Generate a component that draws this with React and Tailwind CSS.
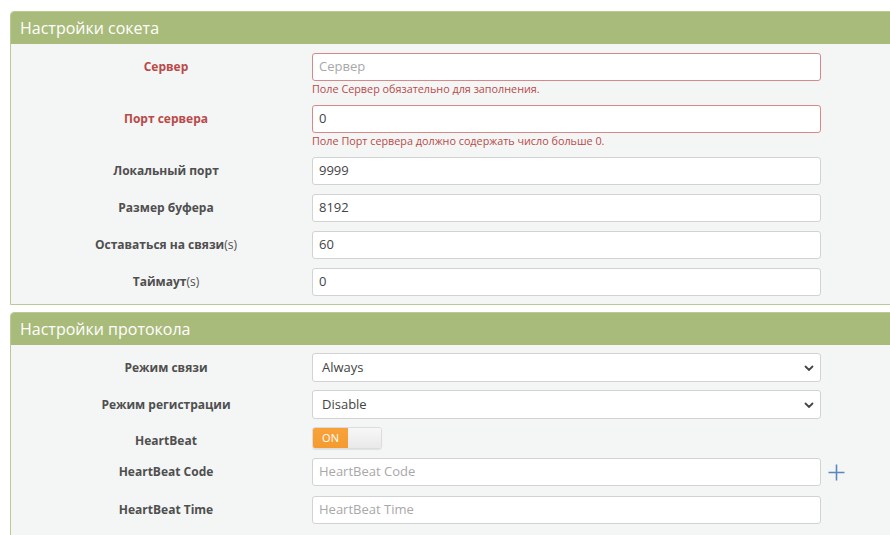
import React from "react";

const font = { fontFamily: '"Open Sans", "Noto Sans", sans-serif' };

function Label({ children, error }) {
  return (
    <div
      className={`w-[301px] shrink-0 pl-[9px] text-center text-[12px] font-bold ${
        error ? "text-[#b94a48]" : "text-[#4f4f4f]"
      }`}
    >
      {children}
    </div>
  );
}

function TextInput({ value, placeholder, error }) {
  return (
    <div
      className={`flex h-[28px] w-[509px] items-center rounded-[3px] border bg-white px-[6px] text-[13px] ${
        error ? "border-[#d9888a]" : "border-[#d2d2d2]"
      } ${value ? "text-[#444]" : "text-[#a8a8a8]"}`}
    >
      {value || placeholder}
    </div>
  );
}

function Row({ label, error, children, message }) {
  return (
    <div className="flex items-start">
      <div className="flex h-[28px] items-center">
        <Label error={error}>{label}</Label>
      </div>
      <div className="flex flex-col">
        {children}
        {message && (
          <div className="mt-[1px] h-[14px] text-[10.8px] leading-[14px] text-[#b94a48]">
            {message}
          </div>
        )}
      </div>
    </div>
  );
}

function Select({ value }) {
  return (
    <div className="flex h-[29px] w-[509px] items-center justify-between rounded-[3px] border border-[#d2d2d2] bg-white pl-[9px] pr-[5px] text-[13px] text-[#444]">
      <span>{value}</span>
      <svg width="12" height="12" viewBox="0 0 12 12">
        <path d="M2.5 4.5 L6 8 L9.5 4.5" fill="none" stroke="#444" strokeWidth="1.8" strokeLinecap="round" />
      </svg>
    </div>
  );
}

function Panel({ title, children }) {
  return (
    <div className="w-[900px] overflow-hidden rounded-tl-[4px] border border-[#b8cb92] bg-[#f4f5f5]">
      <div className="flex h-[32px] items-center bg-[#a9bb7b] pl-[9px] text-[16px] text-white">
        {title}
      </div>
      {children}
    </div>
  );
}

export default function App() {
  return (
    <div className="h-[535px] w-[890px] overflow-hidden bg-white pl-[10px] pt-[11px]" style={font}>
      <Panel title="Настройки сокета">
        <div className="flex flex-col gap-[9px] pb-[8px] pt-[9px]">
          <Row label="Сервер" error message="Поле Сервер обязательно для заполнения.">
            <TextInput placeholder="Сервер" error />
          </Row>
          <Row label="Порт сервера" error message="Поле Порт сервера должно содержать число больше 0.">
            <TextInput value="0" error />
          </Row>
          <Row label="Локальный порт">
            <TextInput value="9999" />
          </Row>
          <Row label="Размер буфера">
            <TextInput value="8192" />
          </Row>
          <Row
            label={
              <>
                Оставаться на связи<span className="font-normal">(s)</span>
              </>
            }
          >
            <TextInput value="60" />
          </Row>
          <Row
            label={
              <>
                Таймаут<span className="font-normal">(s)</span>
              </>
            }
          >
            <TextInput value="0" />
          </Row>
        </div>
      </Panel>

      <div className="h-[7px]" />

      <Panel title="Настройки протокола">
        <div className="flex flex-col gap-[9px] pb-[12px] pt-[8px]">
          <div className="flex items-center">
            <Label>Режим связи</Label>
            <Select value="Always" />
          </div>
          <div className="-mt-[1px] flex items-center">
            <Label>Режим регистрации</Label>
            <Select value="Disable" />
          </div>
          <div className="-mt-[2px] flex items-center">
            <div className="pt-[6px]">
              <Label>HeartBeat</Label>
            </div>
            <div className="flex h-[22px] w-[70px] overflow-hidden rounded-[3px] border border-[#dcdcdc] shadow-[0_1px_1px_rgba(0,0,0,0.08)]">
              <div className="flex w-[35px] items-center justify-center bg-gradient-to-b from-[#f9a23a] to-[#f39b2e] text-[11px] text-white">
                ON
              </div>
              <div className="flex-1 bg-gradient-to-b from-[#f7f7f7] to-[#e9e9e9]" />
            </div>
          </div>
          <div className="-mt-[1px] flex items-center">
            <Label>HeartBeat Code</Label>
            <TextInput placeholder="HeartBeat Code" />
            <svg className="ml-[7px]" width="17" height="17" viewBox="0 0 17 17">
              <path d="M8.5 0.5 V16.5 M0.5 8.5 H16.5" stroke="#5b87bf" strokeWidth="1.6" />
            </svg>
          </div>
          <div className="mt-[1px] flex items-center">
            <Label>HeartBeat Time</Label>
            <TextInput placeholder="HeartBeat Time" />
          </div>
        </div>
      </Panel>
    </div>
  );
}
